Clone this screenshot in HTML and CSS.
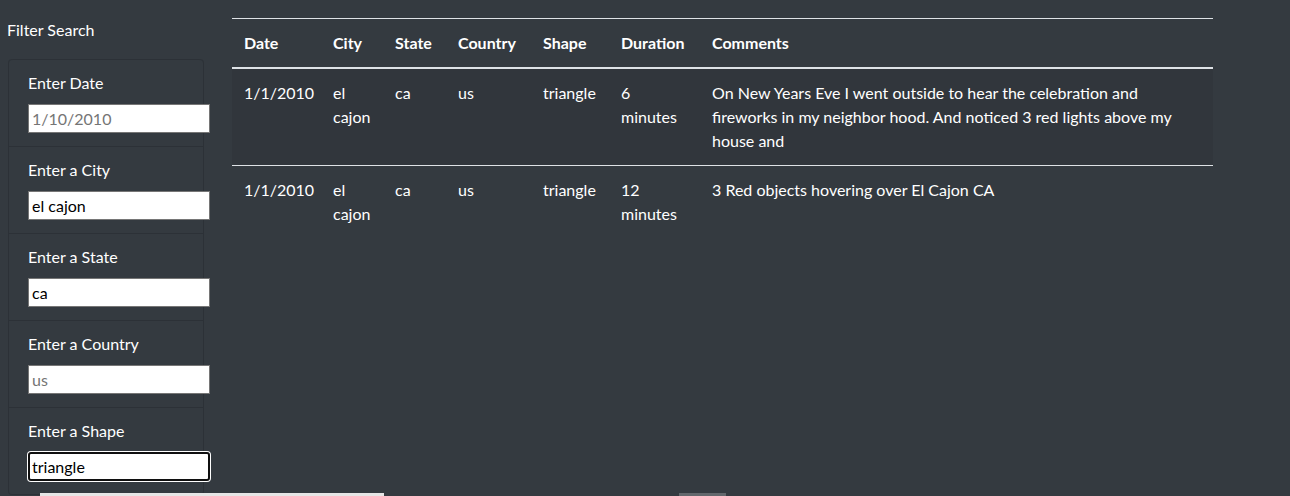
FILE: index.html
```html
<!DOCTYPE html>
<html lang="en">
<head>
<meta charset="utf-8">
<title>UFO Sightings</title>
<link rel="stylesheet" href="styles.css">
</head>
<body>
<div class="page">
  <aside class="sidebar">
    <h2 class="filter-title">Filter Search</h2>
    <ul class="filters">
      <li class="filter">
        <label class="filter-label" for="datetime">Enter Date</label>
        <input class="filter-input" id="datetime" type="text" placeholder="1/10/2010">
      </li>
      <li class="filter">
        <label class="filter-label" for="city">Enter a City</label>
        <input class="filter-input" id="city" type="text" value="el cajon">
      </li>
      <li class="filter">
        <label class="filter-label" for="state">Enter a State</label>
        <input class="filter-input" id="state" type="text" value="ca">
      </li>
      <li class="filter">
        <label class="filter-label" for="country">Enter a Country</label>
        <input class="filter-input" id="country" type="text" placeholder="us">
      </li>
      <li class="filter">
        <label class="filter-label" for="shape">Enter a Shape</label>
        <input class="filter-input is-focused" id="shape" type="text" value="triangle">
      </li>
    </ul>
  </aside>
  <main class="results">
    <table class="ufo-table">
      <colgroup>
        <col class="c-date"><col class="c-city"><col class="c-state"><col class="c-country"><col class="c-shape"><col class="c-duration"><col class="c-comments">
      </colgroup>
      <thead>
        <tr>
          <th>Date</th><th>City</th><th>State</th><th>Country</th><th>Shape</th><th>Duration</th><th>Comments</th>
        </tr>
      </thead>
      <tbody>
        <tr class="striped">
          <td>1/1/2010</td><td>el cajon</td><td>ca</td><td>us</td><td>triangle</td><td>6 minutes</td>
          <td><span class="comment">On New Years Eve I went outside to hear the celebration and fireworks in my neighbor hood. And noticed 3 red lights above my house and</span></td>
        </tr>
        <tr>
          <td>1/1/2010</td><td>el cajon</td><td>ca</td><td>us</td><td>triangle</td><td>12 minutes</td>
          <td><span class="comment">3 Red objects hovering over El Cajon CA</span></td>
        </tr>
      </tbody>
    </table>
  </main>
</div>
<div class="hscroll">
  <span class="hscroll-track"></span>
  <span class="hscroll-thumb"></span>
</div>
</body>
</html>
```

FILE: styles.css
```css
html, body {
  margin: 0;
  padding: 0;
  height: 100%;
  overflow: hidden;
}
body {
  background: #343a40;
  color: #ffffff;
  font-family: "Lato", "Noto Sans", sans-serif;
  font-size: 16px;
  line-height: 24px;
  position: relative;
}
.page {
  display: flex;
  align-items: flex-start;
  padding: 18px 0 0 7px;
}
.sidebar {
  width: 225px;
  flex: none;
}
.filter-title {
  margin: 0 0 17px 0;
  font-size: 16px;
  font-weight: 400;
  line-height: 24px;
}
.filters {
  list-style: none;
  margin: 0 0 0 1px;
  padding: 0;
  width: 194px;
  border: 1px solid rgba(0, 0, 0, 0.14);
  border-top: none;
  border-radius: 4px;
}
.filter {
  border-top: 1px solid rgba(0, 0, 0, 0.14);
  padding: 11px 0 13px 19px;
  display: flex;
  flex-direction: column;
  align-items: flex-start;
}
.filter:first-child {
  border-radius: 4px 4px 0 0;
}
.filter-label {
  margin-bottom: 9px;
  line-height: 24px;
}
.filter-input {
  box-sizing: border-box;
  width: 182px;
  height: 29px;
  margin: 0;
  padding: 0 3px;
  border: 1px solid #767676;
  border-radius: 0;
  background: #ffffff;
  color: #000000;
  font-family: "Lato", "Noto Sans", sans-serif;
  font-size: 16px;
  outline: none;
}
.filter-input::placeholder {
  color: #757575;
}
.filter-input.is-focused {
  border: 2px solid #101010;
  border-radius: 3px;
  padding: 0 2px;
  box-shadow: 0 0 0 1px #ffffff;
}
.results {
  flex: none;
  width: 981px;
}
.ufo-table {
  width: 981px;
  table-layout: fixed;
  border-collapse: collapse;
  border-top: 1px solid #dee2e6;
}
.c-date { width: 89px; }
.c-city { width: 62px; }
.c-state { width: 63px; }
.c-country { width: 85px; }
.c-shape { width: 78px; }
.c-duration { width: 91px; }
.c-comments { width: 513px; }
.ufo-table th,
.ufo-table td {
  padding: 12px;
  text-align: left;
  vertical-align: top;
  line-height: 24px;
}
.ufo-table th {
  font-weight: 700;
  border-bottom: 2px solid #dee2e6;
}
.ufo-table td {
  border-top: 1px solid #dee2e6;
}
.ufo-table tbody tr:first-child td {
  border-top: none;
}
.striped {
  background: #31363c;
}
.comment {
  display: block;
  max-width: 465px;
}
.hscroll {
  position: absolute;
  left: 0;
  right: 0;
  bottom: 0;
  height: 3px;
}
.hscroll-track {
  position: absolute;
  left: 40px;
  width: 344px;
  top: 0;
  bottom: 0;
  background: #e6e6e6;
}
.hscroll-thumb {
  position: absolute;
  left: 679px;
  width: 47px;
  top: 0;
  bottom: 0;
  background: #62676c;
}
```
